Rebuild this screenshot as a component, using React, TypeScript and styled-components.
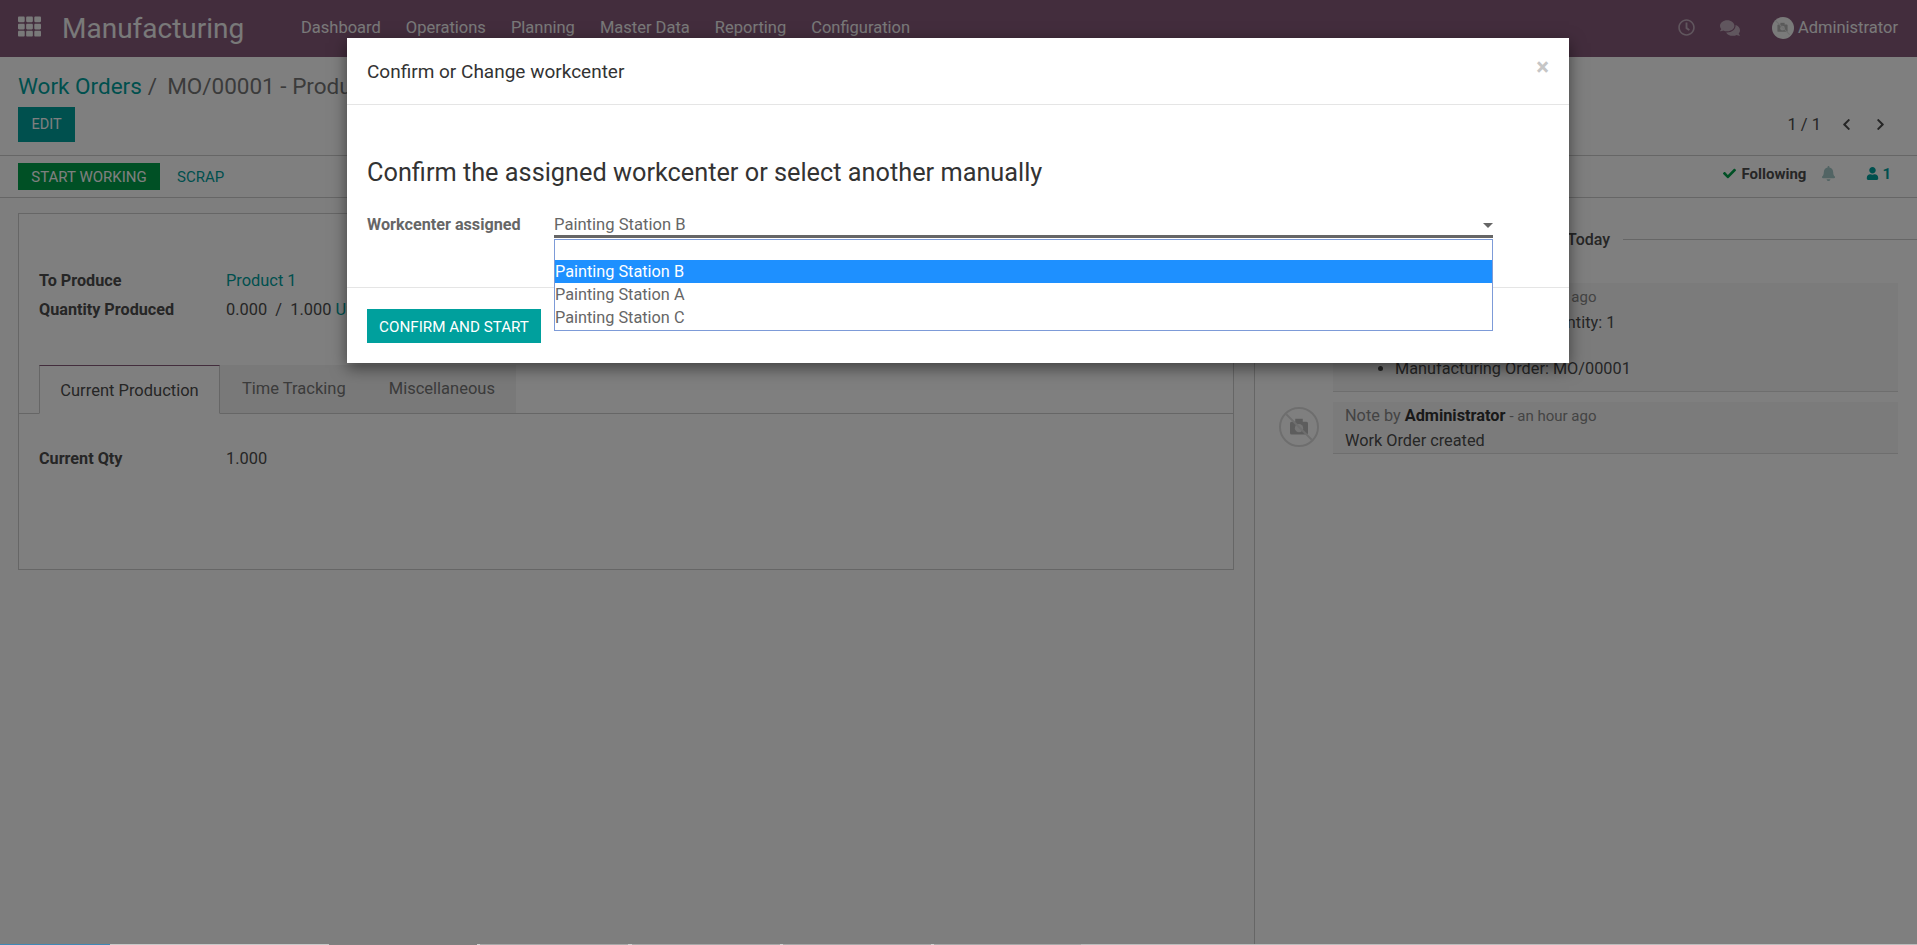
import React from "react";
import styled, { createGlobalStyle } from "styled-components";
import {
  FaBell,
  FaCheck,
  FaChevronLeft,
  FaChevronRight,
  FaComments,
  FaRegClock,
  FaTh,
  FaUser,
} from "react-icons/fa";

const Global = createGlobalStyle`
  html, body { margin: 0; padding: 0; height: 100%; background: #fff; }
  body { font-family: Roboto, "Liberation Sans", sans-serif; font-size: 15px; color: #4c4c4c; overflow: hidden; }
  #root { height: 100%; }
  * { box-sizing: border-box; }
`;

const Page = styled.div`
  width: 1917px;
  height: 945px;
  display: flex;
  flex-direction: column;
  overflow: hidden;
`;

const Screen = styled.div`
  position: relative;
  height: 944px;
  display: flex;
  flex-direction: column;
  overflow: hidden;
`;

const Navbar = styled.header`
  height: 57px;
  flex: none;
  background: #875a7b;
  color: #f2f2f2;
  display: flex;
  align-items: center;
  padding: 0 19px 2px 18px;
`;

const AppsIcon = styled(FaTh)`
  margin-bottom: 2px;
`;

const Brand = styled.div`
  font-size: 28px;
  margin: 2px 55px 0 21px;
  width: 184px;
  white-space: nowrap;
`;

const NavMenu = styled.nav`
  display: flex;
  gap: 25px;
  font-size: 16.5px;
  flex: 1;
`;

const NavTools = styled.div`
  display: flex;
  align-items: center;
  font-size: 16.5px;
`;

const NavIcon = styled.span<{ $gap: number }>`
  display: flex;
  opacity: 0.55;
  margin-right: ${(p) => p.$gap}px;
`;

const AvatarDisc = styled.span`
  width: 22px;
  height: 22px;
  border-radius: 50%;
  background: #f4f4f4;
  display: flex;
  align-items: center;
  justify-content: center;
  margin-right: 4px;
`;

const Breadcrumbs = styled.div`
  font-size: 22.5px;
  height: 26px;
  margin: 16px 0 8px 18px;
  white-space: nowrap;
  color: #777;
`;

const Crumb = styled.span`
  color: #00a09d;
  margin-right: 6px;
`;

const CrumbCurrent = styled.span`
  margin-left: 10px;
`;

const ControlRow = styled.div`
  height: 49px;
  flex: none;
  display: flex;
  justify-content: space-between;
  padding-left: 18px;
  padding-right: 30px;
  border-bottom: 1px solid #ccc;
`;

const Button = styled.span<{ $bg?: string }>`
  display: inline-flex;
  align-items: center;
  justify-content: center;
  background: ${(p) => p.$bg || "#00a09d"};
  color: #fff;
  font-size: 15px;
  text-transform: uppercase;
`;

const EditButton = styled(Button)`
  width: 57px;
  height: 35px;
  font-size: 14.5px;
`;

const Pager = styled.div`
  display: flex;
  align-items: center;
  height: 35px;
  font-size: 16.5px;
  color: #4c4c4c;
`;

const PagerArrow = styled.span<{ $gap: number }>`
  display: flex;
  margin-left: ${(p) => p.$gap}px;
`;

const StatusRow = styled.div`
  height: 42px;
  flex: none;
  display: flex;
  align-items: center;
  padding: 0 26px 0 18px;
  border-bottom: 1px solid #ccc;
`;

const StartButton = styled(Button)`
  width: 142px;
  height: 27px;
`;

const LinkButton = styled.span`
  color: #00a09d;
  font-size: 15px;
  text-transform: uppercase;
  margin-left: 17px;
  flex: 1;
`;

const Follow = styled.div`
  display: flex;
  align-items: center;
  font-weight: 700;
  font-size: 15px;
  padding-bottom: 6px;
`;

const CheckIcon = styled(FaCheck)`
  color: #00a04a;
  margin-right: 5px;
`;

const BellIcon = styled(FaBell)`
  color: #a5c9c8;
  margin-left: 15px;
`;

const UserIcon = styled(FaUser)`
  color: #00a09d;
  margin-left: 30px;
`;

const FollowerCount = styled.span`
  color: #00a09d;
  margin-left: 3px;
`;

const Columns = styled.div`
  flex: 1;
  display: flex;
  min-height: 0;
`;

const FormArea = styled.main`
  width: 1255px;
  flex: none;
  background: #fcfcfc;
  border-right: 1px solid #ccc;
  padding: 15px 20px 0 18px;
`;

const Sheet = styled.section`
  height: 357px;
  background: #fff;
  border: 1px solid #ccc;
  padding-top: 52px;
`;

const FieldGroup = styled.div`
  padding: 0 16px 0 16px;
  margin-left: 4px;
  display: grid;
  grid-template-columns: 187px 1fr;
  grid-auto-rows: 29px;
  align-items: center;
  font-size: 16.4px;
`;

const FieldLabel = styled.div`
  font-weight: 700;
  font-size: 16.2px;
`;

const Accent = styled.span`
  color: #00a09d;
`;

const TabBar = styled.div`
  display: flex;
  height: 49px;
  margin-top: 41px;
  padding-left: 20px;
  border-bottom: 1px solid #ccc;
  font-size: 16.5px;
`;

const Tab = styled.div<{ $active?: boolean }>`
  height: ${(p) => (p.$active ? "49px" : "48px")};
  display: flex;
  justify-content: center;
  width: ${(p) => (p.$active ? "181px" : "auto")};
  padding: ${(p) => (p.$active ? "15px 0 0" : "13px 20px 0 21px")};
  background: ${(p) => (p.$active ? "#fff" : "#f2f2f2")};
  border: 1px solid ${(p) => (p.$active ? "#ccc" : "#f2f2f2")};
  border-top-color: ${(p) => (p.$active ? "#875a7b" : "#f2f2f2")};
  border-bottom-color: ${(p) => (p.$active ? "#fff" : "#f2f2f2")};
  color: ${(p) => (p.$active ? "#4c4c4c" : "#777")};
`;

const TabBody = styled(FieldGroup)`
  margin-top: 30px;
`;

const Chatter = styled.aside`
  flex: 1;
  padding-top: 28px;
  padding-right: 19px;
`;

const DayLine = styled.div`
  display: flex;
  align-items: center;
  height: 26px;
  margin-right: -19px;
  padding-left: 312px;
  font-weight: 500;
  gap: 13px;
  font-size: 16px;
  &::after {
    content: "";
    flex: 1;
    border-top: 1px solid #ccc;
  }
`;

const Thread = styled.div<{ $top: number }>`
  display: flex;
  align-items: flex-start;
  padding-left: 24px;
  gap: 14px;
  margin-top: ${(p) => p.$top}px;
`;

const Message = styled.div<{ $h: number }>`
  flex: 1;
  height: ${(p) => p.$h}px;
  background: #f7f7f7;
  border-bottom: 1px solid #ddd;
  padding: 2px 12px;
  font-size: 16.3px;
  line-height: 26px;
`;

const Stamp = styled.div`
  font-size: 16.3px;
  color: #888;
  line-height: 24px;
`;

const StampTime = styled.span`
  font-size: 15px;
`;

const Author = styled.b`
  color: #333;
  font-weight: 700;
`;

const Tracking = styled.ul`
  margin: 1px 0 0;
  padding-left: 50px;
`;

const TrackingItem = styled.li`
  & + & {
    margin-top: 20px;
  }
`;

const Backdrop = styled.div`
  position: absolute;
  inset: 0;
  background: rgba(0, 0, 0, 0.5);
`;

const Modal = styled.div`
  position: absolute;
  left: 347px;
  top: 38px;
  width: 1222px;
  height: 325px;
  background: #fff;
  box-shadow: 0 5px 15px rgba(0, 0, 0, 0.5);
  display: flex;
  flex-direction: column;
`;

const ModalHeader = styled.div`
  height: 67px;
  flex: none;
  border-bottom: 1px solid #e5e5e5;
  display: flex;
  align-items: center;
  justify-content: space-between;
  padding: 0 20px;
  font-size: 19px;
  color: #333;
`;

const CloseMark = styled.span`
  color: #c6c6c6;
  font-size: 24px;
  font-weight: 700;
  margin-bottom: 8px;
`;

const ModalBody = styled.div`
  height: 183px;
  flex: none;
  padding: 0 20px;
  border-bottom: 1px solid #e5e5e5;
`;

const Heading = styled.h3`
  margin: 52px 0 0;
  font-size: 25.3px;
  line-height: 32px;
  font-weight: 400;
  color: #333;
  white-space: nowrap;
`;

const SelectRow = styled.div`
  display: grid;
  grid-template-columns: 187px 939px;
  margin-top: 19px;
  font-size: 16.6px;
  color: #666;
`;

const SelectLabel = styled(FieldLabel)`
  padding-top: 7px;
`;

const SelectBox = styled.div`
  position: relative;
  height: 30px;
  padding-top: 4px;
  border-bottom: 3px solid #666;
  line-height: 26px;
`;

const Caret = styled.span`
  position: absolute;
  right: 0;
  top: 15px;
  border: 5px solid transparent;
  border-top-color: #666;
  border-bottom: none;
`;

const Dropdown = styled.div`
  position: absolute;
  z-index: 2;
  left: 0;
  right: 0;
  top: 31px;
  height: 92px;
  background: #fff;
  border: 1px solid #7d9bd8;
  padding-top: 20px;
  font-size: 16.3px;
`;

const Option = styled.div<{ $selected?: boolean }>`
  height: 23px;
  line-height: 23px;
  background: ${(p) => (p.$selected ? "#1e90ff" : "#fff")};
  color: ${(p) => (p.$selected ? "#fff" : "#666")};
`;

const ModalFooter = styled.div`
  padding: 21px 20px;
  display: flex;
  align-items: center;
`;

const ConfirmButton = styled(Button)`
  width: 174px;
  height: 34px;
  padding-top: 1px;
  font-size: 15.2px;
`;

const CancelLink = styled(LinkButton)`
  margin-left: 18px;
  flex: none;
`;

const BottomStrip = styled.div`
  height: 1px;
  flex: none;
  display: flex;
`;

const StripPiece = styled.div<{ $w: number; $c: string }>`
  width: ${(p) => p.$w}px;
  background: ${(p) => p.$c};
`;

const ChatAvatar = styled.span`
  width: 40px;
  height: 40px;
  flex: none;
  margin-top: 5px;
  border: 2px solid #ddd;
  border-radius: 50%;
  display: flex;
  align-items: center;
  justify-content: center;
`;

function NoPhoto({ size, color }: { size: number; color: string }) {
  return (
    <svg width={size} height={size} viewBox="0 0 40 40" fill="none">
      <rect x="8" y="13" width="24" height="17" rx="2" fill={color} />
      <rect x="15" y="9" width="10" height="5" fill={color} />
      <circle cx="20" cy="21.5" r="5.5" fill="#fff" fillOpacity="0.7" />
      <path d="M3 3 L37 37" stroke="#ddd" strokeWidth="2.5" />
    </svg>
  );
}

const menu = ["Dashboard", "Operations", "Planning", "Master Data", "Reporting", "Configuration"];

const strip: [number, string][] = [
  [110, "#3f88b5"],
  [219, "#c8c8c8"],
  [148, "#808080"],
  [604, "repeating-linear-gradient(to right, #d2d2d2 0 3px, #a8a8a8 3px 151.5px)"],
  [836, "#bcbcbc"],
];

export default function App() {
  return (
    <Page>
      <Global />
      <Screen>
        <Navbar>
          <AppsIcon size={23} />
          <Brand>Manufacturing</Brand>
          <NavMenu>
            {menu.map((m) => (
              <span key={m}>{m}</span>
            ))}
          </NavMenu>
          <NavTools>
            <NavIcon $gap={25}><FaRegClock size={17} /></NavIcon>
            <NavIcon $gap={32}><FaComments size={20} /></NavIcon>
            <AvatarDisc>
              <NoPhoto size={17} color="#b5b5b5" />
            </AvatarDisc>
            Administrator
          </NavTools>
        </Navbar>
        <Breadcrumbs>
          <Crumb>Work Orders</Crumb>/<CrumbCurrent>MO/00001 - Product 1</CrumbCurrent>
        </Breadcrumbs>
        <ControlRow>
          <EditButton>Edit</EditButton>
          <Pager>
            1 / 1
            <PagerArrow $gap={19}><FaChevronLeft size={13} /></PagerArrow>
            <PagerArrow $gap={21}><FaChevronRight size={13} /></PagerArrow>
          </Pager>
        </ControlRow>
        <StatusRow>
          <StartButton $bg="#00a04a">Start Working</StartButton>
          <LinkButton>Scrap</LinkButton>
          <Follow>
            <CheckIcon size={13} />
            Following
            <BellIcon size={15} />
            <UserIcon size={13} />
            <FollowerCount>1</FollowerCount>
          </Follow>
        </StatusRow>
        <Columns>
          <FormArea>
            <Sheet>
              <FieldGroup>
                <FieldLabel>To Produce</FieldLabel>
                <Accent>Product 1</Accent>
                <FieldLabel>Quantity Produced</FieldLabel>
                <div>
                  0.000 &nbsp;/&nbsp; 1.000 <Accent>Unit(s)</Accent>
                </div>
              </FieldGroup>
              <TabBar>
                <Tab $active>Current Production</Tab>
                <Tab>Time Tracking</Tab>
                <Tab>Miscellaneous</Tab>
              </TabBar>
              <TabBody>
                <FieldLabel>Current Qty</FieldLabel>
                <div>1.000</div>
              </TabBody>
            </Sheet>
          </FormArea>
          <Chatter>
            <DayLine>Today</DayLine>
            <Thread $top={31}>
              <ChatAvatar>
                <NoPhoto size={30} color="#bbb" />
              </ChatAvatar>
              <Message $h={109}>
                <Stamp>
                  Note by <Author>Administrator</Author> <StampTime>- an hour ago</StampTime>
                </Stamp>
                <Tracking>
                  <TrackingItem>Original Production Quantity: 1</TrackingItem>
                  <TrackingItem>Manufacturing Order: MO/00001</TrackingItem>
                </Tracking>
              </Message>
            </Thread>
            <Thread $top={10}>
              <ChatAvatar>
                <NoPhoto size={30} color="#bbb" />
              </ChatAvatar>
              <Message $h={52}>
                <Stamp>
                  Note by <Author>Administrator</Author> <StampTime>- an hour ago</StampTime>
                </Stamp>
                Work Order created
              </Message>
            </Thread>
          </Chatter>
        </Columns>
        <Backdrop />
        <Modal>
          <ModalHeader>
            Confirm or Change workcenter
            <CloseMark>×</CloseMark>
          </ModalHeader>
          <ModalBody>
            <Heading>Confirm the assigned workcenter or select another manually</Heading>
            <SelectRow>
              <SelectLabel>Workcenter assigned</SelectLabel>
              <SelectBox>
                Painting Station B
                <Caret />
                <Dropdown>
                  <Option $selected>Painting Station B</Option>
                  <Option>Painting Station A</Option>
                  <Option>Painting Station C</Option>
                </Dropdown>
              </SelectBox>
            </SelectRow>
          </ModalBody>
          <ModalFooter>
            <ConfirmButton>Confirm and Start</ConfirmButton>
            <CancelLink>Cancel</CancelLink>
          </ModalFooter>
        </Modal>
      </Screen>
      <BottomStrip>
        {strip.map(([w, c], i) => (
          <StripPiece key={i} $w={w} $c={c} />
        ))}
      </BottomStrip>
    </Page>
  );
}
